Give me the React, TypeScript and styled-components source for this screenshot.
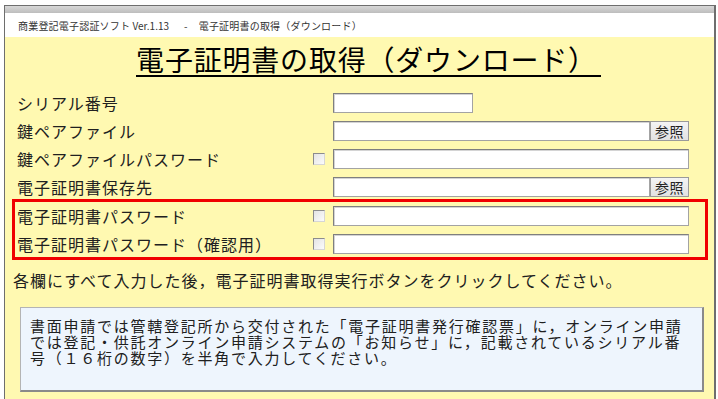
import { createGlobalStyle, styled } from "styled-components";

const GlobalStyle = createGlobalStyle`
  html, body {
    margin: 0;
    padding: 0;
    background: #fff;
    overflow: hidden;
  }
  body {
    font-family: "Noto Sans CJK JP", "Noto Sans", sans-serif;
    color: #1c1c1c;
  }
`;

type Row = {
  label: string;
  check?: boolean;
  browse?: boolean;
  short?: boolean;
};

const rows: Row[] = [
  { label: "シリアル番号", short: true },
  { label: "鍵ペアファイル", browse: true },
  { label: "鍵ペアファイルパスワード", check: true },
  { label: "電子証明書保存先", browse: true },
];

const passwordRows: Row[] = [
  { label: "電子証明書パスワード", check: true },
  { label: "電子証明書パスワード（確認用）", check: true },
];

const infoLines = [
  "書面申請では管轄登記所から交付された「電子証明書発行確認票」に，オンライン申請",
  "では登記・供託オンライン申請システムの「お知らせ」に，記載されているシリアル番",
  "号（１６桁の数字）を半角で入力してください。",
];

function FieldRow({ row }: { row: Row }) {
  return (
    <RowLine>
      <Label>{row.label}</Label>
      <CheckCell>{row.check && <CheckBox />}</CheckCell>
      <InputCell>
        <TextInput $short={row.short} />
        {row.browse && <BrowseButton>参照</BrowseButton>}
      </InputCell>
    </RowLine>
  );
}

export default function App() {
  return (
    <>
      <GlobalStyle />
      <Window>
        <TitleBar>
          商業登記電子認証ソフト<Version> Ver.1.13</Version>
          <Dash>-</Dash>電子証明書の取得（ダウンロード）
        </TitleBar>
        <Content>
          <Heading>
            <span>電子証明書の取得（ダウンロード）</span>
          </Heading>
          <Form>
            {rows.map((r) => (
              <FieldRow key={r.label} row={r} />
            ))}
            <Highlight>
              {passwordRows.map((r) => (
                <FieldRow key={r.label} row={r} />
              ))}
            </Highlight>
          </Form>
          <Instruction>
            各欄にすべて入力した後，電子証明書取得実行ボタンをクリックしてください。
          </Instruction>
          <InfoBox>
            {infoLines.map((line) => (
              <InfoLine key={line}>{line}</InfoLine>
            ))}
          </InfoBox>
        </Content>
      </Window>
    </>
  );
}

const Window = styled.div`
  margin: 5px 0 0 4px;
  width: 712px;
  height: 400px;
  box-sizing: border-box;
  border-left: 1px solid #6e6e6e;
  border-right: 2px solid #6e6e6e;
  border-top: 1px solid #6e6e6e;
  display: flex;
  flex-direction: column;
  background: linear-gradient(#d8d8d8, #bdbdbd) top / 100% 7px no-repeat;
  padding-top: 7px;
`;

const TitleBar = styled.div`
  height: 24px;
  background: #fff;
  display: flex;
  align-items: center;
  padding-left: 13px;
  font-size: 10px;
  letter-spacing: 0.2px;
  color: #333;
  white-space: pre;
`;

const Version = styled.span`
  letter-spacing: 0;
`;

const Dash = styled.span`
  margin: 0 11px 0 15px;
`;

const Content = styled.div`
  flex: 1;
  background: #fff9b1;
  display: flex;
  flex-direction: column;
`;

const Heading = styled.h1`
  margin: 0;
  padding-top: 5px;
  height: 34px;
  text-align: center;
  font-size: 28px;
  line-height: 34px;
  font-weight: 400;
  color: #000;
  letter-spacing: 0.8px;

  span {
    display: inline-block;
    margin-left: 18px;
    padding-right: 4px;
    border-bottom: 2px solid #000;
    line-height: 31px;
  }
`;

const Form = styled.div`
  margin-top: 13px;
  padding: 0 8px 0 9px;
  display: flex;
  flex-direction: column;
`;

const Highlight = styled.div`
  outline: 3px solid #f00000;
  outline-offset: -1px;
  padding: 1px 0 0;
`;

const RowLine = styled.div`
  display: grid;
  grid-template-columns: 299px 20px 356px;
  height: 28px;
  align-items: center;
`;

const Label = styled.div`
  padding-left: 3px;
  font-size: 16px;
  letter-spacing: 1px;
  color: #202020;
  white-space: nowrap;
`;

const CheckCell = styled.div`
  display: flex;
  align-items: center;
`;

const CheckBox = styled.span`
  width: 10px;
  height: 10px;
  border: 1px solid #8c8c8c;
  border-right-color: #d6d6d6;
  border-bottom-color: #d6d6d6;
  background: linear-gradient(135deg, #e4e4e4, #fbfbfb);
`;

const InputCell = styled.div`
  display: flex;
  align-items: center;
  height: 20px;
`;

const TextInput = styled.div<{ $short?: boolean }>`
  box-sizing: border-box;
  height: 20px;
  width: ${({ $short }) => ($short ? "140px" : "auto")};
  flex: ${({ $short }) => ($short ? "none" : "1")};
  background: #fff;
  border: 1px solid #a3a3a3;
  border-top-color: #7f7f7f;
  border-left-color: #7f7f7f;
  box-shadow: inset 1px 1px 0 #d4d4d4;
`;

const BrowseButton = styled.div`
  box-sizing: border-box;
  width: 39px;
  height: 20px;
  display: flex;
  align-items: center;
  justify-content: center;
  background: linear-gradient(#f4f4f4, #e2e2e2);
  border: 1px solid #9a9a9a;
  font-size: 14px;
  color: #222;
  letter-spacing: 0.5px;
`;

const Instruction = styled.div`
  margin-top: 11px;
  padding-left: 8px;
  font-size: 16px;
  line-height: 22px;
  letter-spacing: 1px;
  color: #202020;
  white-space: nowrap;
`;

const InfoBox = styled.div`
  margin: 16px 10px 0 15px;
  height: 85px;
  box-sizing: border-box;
  padding: 10px 0 0 9px;
  background: #eef5fd;
  border: 1px solid #b4b4b4;
  border-right: 2px solid #8a8a8a;
  border-bottom: 2px solid #8a8a8a;
  display: flex;
  flex-direction: column;
`;

const InfoLine = styled.div`
  height: 16px;
  font-size: 15px;
  line-height: 16px;
  letter-spacing: 1.75px;
  color: #202020;
  white-space: nowrap;
`;
